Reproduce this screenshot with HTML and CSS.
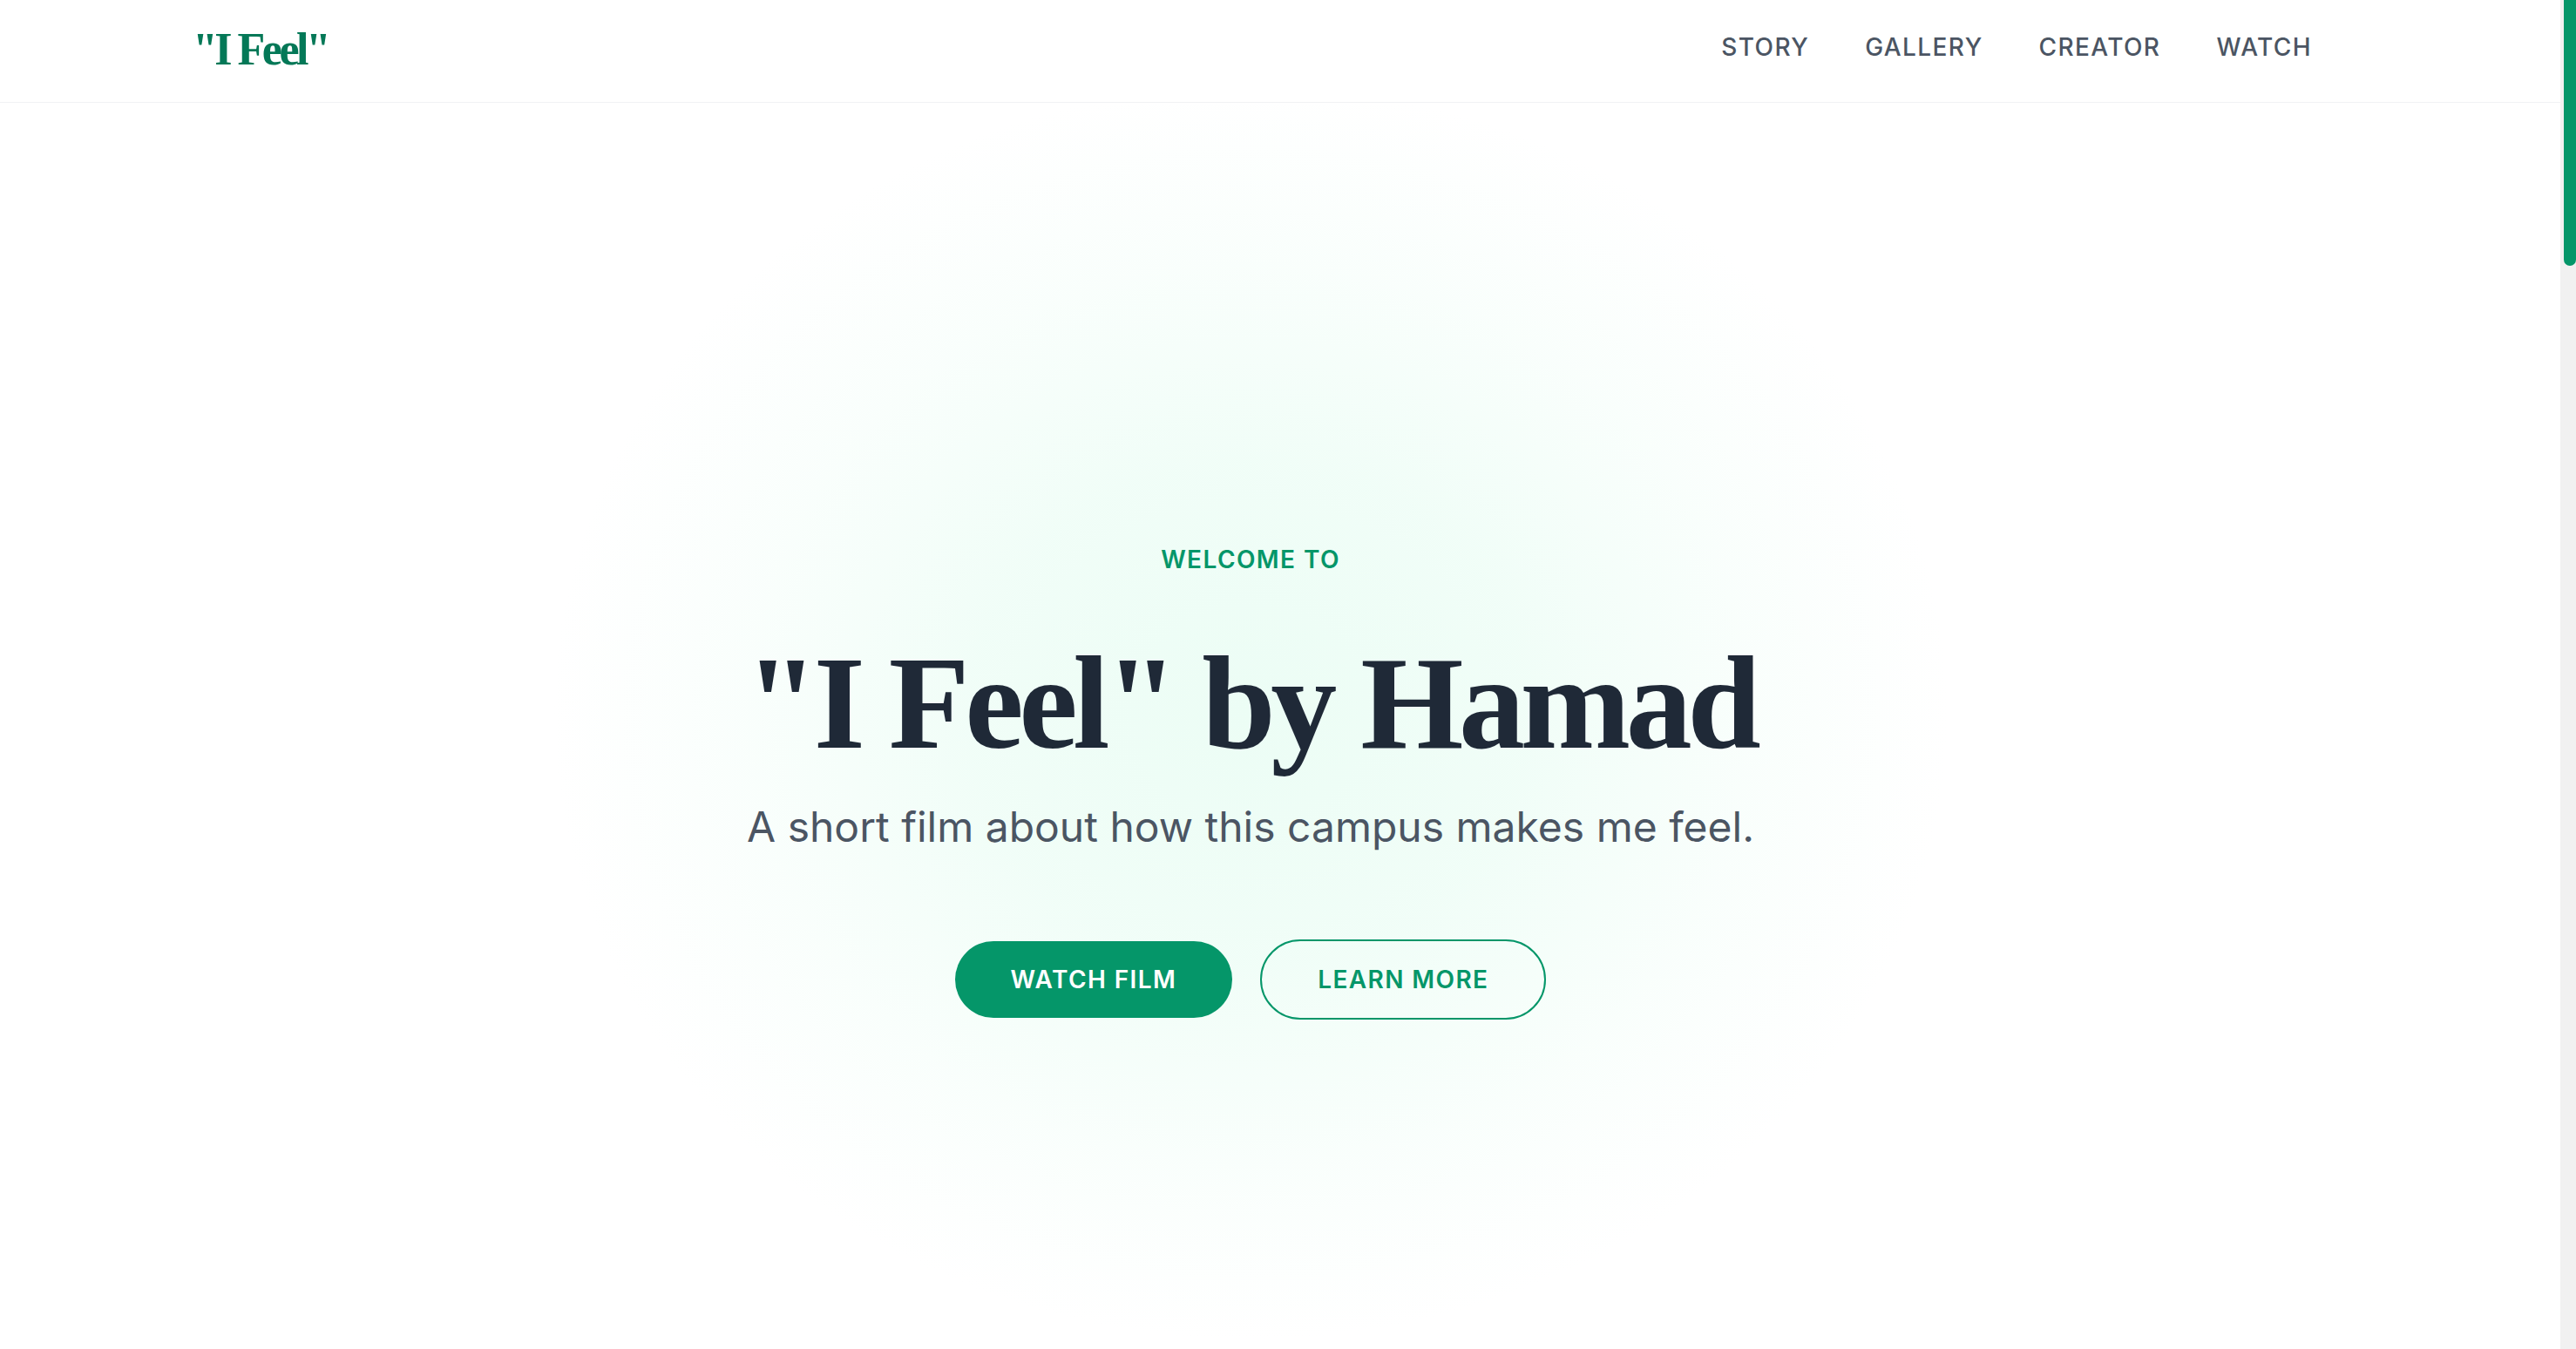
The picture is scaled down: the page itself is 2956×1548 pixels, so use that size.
FILE: index.html
```html
<!DOCTYPE html>
<html lang="en">
<head>
<meta charset="utf-8">
<title>"I Feel" by Hamad</title>
<link rel="stylesheet" href="styles.css">
</head>
<body>
<header class="site-header">
  <div class="container header-inner">
    <a class="logo" href="#">"I Feel"</a>
    <nav class="nav">
      <a href="#story">STORY</a>
      <a href="#gallery">GALLERY</a>
      <a href="#creator">CREATOR</a>
      <a href="#watch">WATCH</a>
    </nav>
  </div>
</header>
<main>
  <section class="hero">
    <p class="eyebrow">WELCOME TO</p>
    <h1 class="hero-title">"I Feel" by Hamad</h1>
    <p class="hero-sub">A short film about how this campus makes me feel.</p>
    <div class="hero-actions">
      <a class="btn btn-solid" href="#watch">WATCH FILM</a>
      <a class="btn btn-outline" href="#story">LEARN MORE</a>
    </div>
  </section>
  <section class="section" id="story"></section>
  <section class="section" id="gallery"></section>
  <section class="section" id="creator"></section>
  <section class="section" id="watch"></section>
</main>
<div class="scroll-track" aria-hidden="true"><div class="scroll-thumb"></div></div>
</body>
</html>
```
FILE: styles.css
```css
* {
  box-sizing: border-box;
}

body {
  margin: 0;
  padding-right: 18px;
  background: #ffffff;
  font-family: Inter, "Noto Sans", sans-serif;
  color: #1f2937;
}

a {
  text-decoration: none;
}

.scroll-track {
  position: fixed;
  top: 0;
  right: 0;
  bottom: 0;
  width: 18px;
  background: #f1f1f1;
  padding-left: 4px;
}

.scroll-thumb {
  height: 305px;
  background: #059669;
  border-radius: 0 0 7px 7px;
}

.container {
  max-width: 2560px;
  margin: 0 auto;
  padding: 0 32px;
}

.site-header {
  background: #ffffff;
  border-bottom: 1px solid #f1f2f4;
}

.header-inner {
  height: 117px;
  display: flex;
  align-items: flex-start;
  justify-content: space-between;
  padding-top: 31px;
}

.logo {
  font-family: "Liberation Serif", "Times New Roman", serif;
  font-weight: 700;
  font-size: 52px;
  line-height: 52px;
  letter-spacing: -3.5px;
  color: #047857;
}

.nav {
  display: flex;
  gap: 64px;
  margin-top: 3px;
  margin-right: 64px;
}

.nav a {
  font-size: 28px;
  line-height: 40px;
  font-weight: 500;
  letter-spacing: 0.05em;
  color: #4b5563;
}

.hero {
  min-height: 1430px;
  padding: 504px 68px 0 0;
  display: flex;
  flex-direction: column;
  align-items: center;
  text-align: center;
  background:
    radial-gradient(ellipse 800px 720px at calc(50% - 34px) 700px,
      rgba(236, 253, 245, 1) 0%,
      rgba(236, 253, 245, 0.75) 40%,
      rgba(236, 253, 245, 0.3) 72%,
      rgba(236, 253, 245, 0) 100%);
}

.eyebrow {
  margin: 0;
  font-size: 28px;
  line-height: 40px;
  font-weight: 600;
  letter-spacing: 0.05em;
  color: #059669;
}

.hero-title {
  margin: 62px 0 0;
  font-family: "Liberation Serif", "Times New Roman", serif;
  font-weight: 700;
  font-size: 152px;
  line-height: 1.1;
  letter-spacing: -5.5px;
  color: #1f2937;
}

.hero-sub {
  margin: 26px 0 0;
  font-size: 48px;
  line-height: 64px;
  font-weight: 400;
  color: #4b5563;
}

.hero-actions {
  margin-top: 97px;
  display: flex;
  align-items: center;
  gap: 32px;
}

.btn {
  display: inline-block;
  padding: 24px 64px;
  border-radius: 9999px;
  font-size: 28px;
  line-height: 40px;
  font-weight: 600;
  letter-spacing: 0.05em;
}

.btn-solid {
  background: #059669;
  color: #ffffff;
}

.btn-outline {
  border: 2px solid #059669;
  color: #059669;
  background: transparent;
}

.section {
  min-height: 1577px;
}
```
